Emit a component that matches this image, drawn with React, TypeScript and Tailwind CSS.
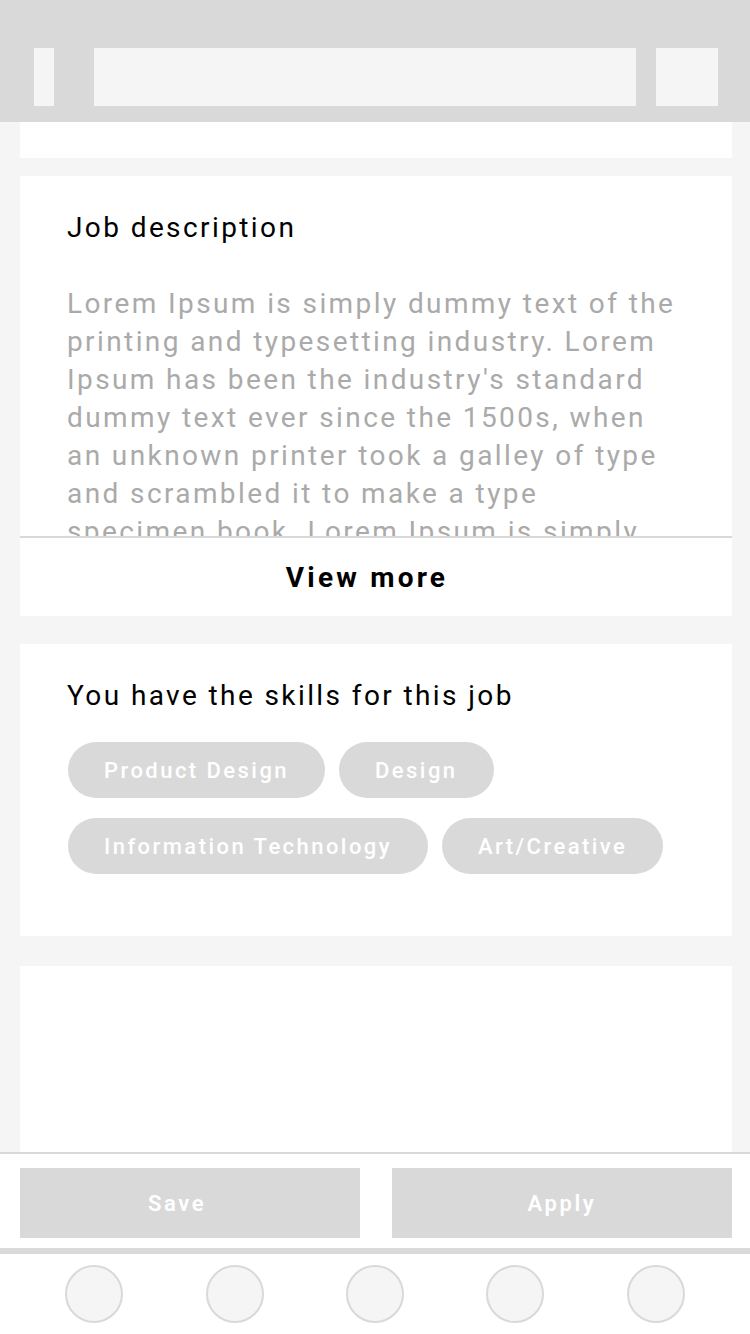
const skills = ['Product Design', 'Design', 'Information Technology', 'Art/Creative'];

const description =
  "Lorem Ipsum is simply dummy text of the printing and typesetting industry. Lorem Ipsum has been the industry's standard dummy text ever since the 1500s, when an unknown printer took a galley of type and scrambled it to make a type specimen book. Lorem Ipsum is simply dummy text of the printing and typesetting industry.";

export default function App() {
  return (
    <div
      className="h-[1334px] w-[750px] flex flex-col overflow-hidden bg-[#f5f5f5]"
      style={{ fontFamily: 'Roboto, "Noto Sans", sans-serif' }}
    >
      {/* Header */}
      <div className="h-[122px] shrink-0 bg-[#d9d9d9] flex items-start pt-[48px] pl-[34px] pr-[32px]">
        <div className="w-[20px] h-[58px] bg-[#f5f5f5]" />
        <div className="w-[542px] h-[58px] bg-[#f5f5f5] ml-[40px]" />
        <div className="w-[62px] h-[58px] bg-[#f5f5f5] ml-[20px]" />
      </div>

      {/* Content */}
      <div className="flex-1 overflow-hidden pl-[20px] pr-[18px] flex flex-col">
        <div className="h-[36px] shrink-0 bg-white" />

        {/* Job description */}
        <div className="mt-[18px] bg-white shrink-0">
          <div className="pt-[33px] pl-[47px] pr-[50px]">
            <h2 className="text-[28px] leading-[38px] text-black tracking-[2.4px]">Job description</h2>
            <p className="mt-[38px] h-[251px] overflow-hidden text-[28px] leading-[38px] text-[#aaaaaa] tracking-[2.4px]">
              {description}
            </p>
          </div>
          <div className="border-t-2 border-[#d9d9d9] h-[80px] flex items-center justify-center pr-[18px] pt-[2px]">
            <span className="text-[28px] font-bold text-black tracking-[3.2px]">View more</span>
          </div>
        </div>

        {/* Skills */}
        <div className="mt-[28px] bg-white shrink-0 pt-[33px] px-[47px] pb-[62px]">
          <h2 className="text-[28px] leading-[38px] text-black tracking-[2.4px]">You have the skills for this job</h2>
          <div className="mt-[27px] flex flex-wrap gap-x-[14px] gap-y-[20px] pl-[1px]">
            {skills.map(skill => (
              <span
                key={skill}
                className="h-[56px] px-[36px] rounded-full bg-[#d9d9d9] text-white text-[22px] font-medium tracking-[2.45px] flex items-center"
              >
                {skill}
              </span>
            ))}
          </div>
        </div>

        <div className="mt-[30px] flex-1 bg-white" />
      </div>

      {/* Action bar */}
      <div className="shrink-0 bg-white border-t-2 border-[#d9d9d9] pl-[20px] pr-[18px] pt-[14px] pb-[10px] flex justify-between">
        <button className="w-[340px] h-[70px] bg-[#d9d9d9] text-white text-[22px] font-semibold tracking-[2.6px] pr-[26px]">Save</button>
        <button className="w-[340px] h-[70px] bg-[#d9d9d9] text-white text-[22px] font-semibold tracking-[2.6px]">Apply</button>
      </div>

      {/* Tab bar */}
      <div className="shrink-0 h-[86px] bg-white border-t-[6px] border-[#d9d9d9] grid grid-cols-5 px-[24px] items-center">
        {[0, 1, 2, 3, 4].map(i => (
          <div key={i} className="flex justify-center">
            <div className="w-[58px] h-[58px] rounded-full bg-[#f5f5f5] border-2 border-[#d9d9d9]" />
          </div>
        ))}
      </div>
    </div>
  );
}
